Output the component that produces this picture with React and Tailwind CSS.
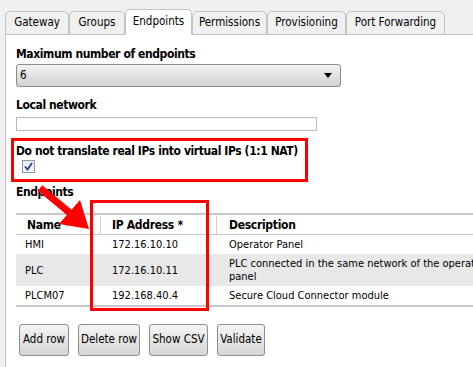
const tabs = [
  ['Gateway', 'w-[64px]'],
  ['Groups', 'w-[56px]'],
  ['Endpoints', 'w-[67px]'],
  ['Permissions', 'w-[75px]'],
  ['Provisioning', 'w-[79px]'],
  ['Port Forwarding', 'w-[99px]'],
];

const rows = [
  { name: 'HMI', ip: '172.16.10.10', desc: 'Operator Panel' },
  { name: 'PLC', ip: '172.16.10.11', desc: 'PLC connected in the same network of the operator panel', alt: true },
  { name: 'PLCM07', ip: '192.168.40.4', desc: 'Secure Cloud Connector module' },
];

function Btn({ children, className = '' }) {
  return (
    <button
      type="button"
      className={`h-[32px] whitespace-nowrap rounded-[3px] border border-[#8e8e8e] bg-gradient-to-b from-[#f4f4f4] to-[#d6d6d6] text-[11.5px] text-black ${className}`}
    >
      {children}
    </button>
  );
}

export default function App() {
  return (
    <div
      className="relative h-[367px] w-[473px] overflow-hidden bg-[#f0f0f0] text-black"
      style={{ fontFamily: '"DejaVu Sans Condensed", "Liberation Sans", Arial, sans-serif' }}
    >
      {/* tab strip */}
      <div className="flex h-[34px] items-end pl-[5px]">
        {tabs.map(([t, w]) => (
          <div
            key={t}
            className={`relative -mb-px flex h-[24px] items-center justify-center whitespace-nowrap rounded-t-[5px] border border-[#c4c4c4] text-[11.5px] ${w} ${
              t === 'Endpoints' ? 'z-10 h-[26px] border-b-white bg-white' : 'bg-[#f0f0f0]'
            }`}
          >
            {t}
          </div>
        ))}
      </div>

      {/* panel */}
      <div className="ml-[5px] h-[333px] border-l border-t border-[#c4c4c4] bg-white pl-[10px] pt-[11px]">
        <div className="whitespace-nowrap text-[12px] font-bold leading-[16px] tracking-[-0.4px]">
          Maximum number of endpoints
        </div>
        <div className="mt-[2px] flex h-[23px] w-[325px] items-center justify-between rounded-[3px] border border-[#8a8a8a] bg-gradient-to-b from-[#f2f2f2] to-[#d2d2d2] pl-[3px] pr-[8px] text-[11.5px]">
          <span>6</span>
          <svg width="8" height="5" viewBox="0 0 8 5">
            <path d="M0 0h8L4 5z" fill="#000" />
          </svg>
        </div>

        <div className="mt-[10px] whitespace-nowrap text-[12px] font-bold leading-[16px] tracking-[-0.4px]">
          Local network
        </div>
        <div className="mt-[4px] h-[14px] w-[301px] border border-[#b8b8b8] bg-white" />

        <div className="-ml-[5px] mt-[7px] h-[44px] w-[297px] border-[3px] border-[#ff0000] pl-[2px] pt-[2px]">
          <div className="whitespace-nowrap text-[12px] font-bold leading-[16px] tracking-[-0.4px]">
            Do not translate real IPs into virtual IPs (1:1 NAT)
          </div>
          <div className="ml-[6px] mt-[1px] flex h-[13px] w-[13px] items-center justify-center border border-[#8b96a8] bg-gradient-to-b from-[#e6e9f0] to-[#f6f7fa]">
            <svg width="9" height="9" viewBox="0 0 9 9">
              <path d="M1 4.5l2.5 3L8 1" fill="none" stroke="#27408b" strokeWidth="1.8" />
            </svg>
          </div>
        </div>

        <div className="mt-[2px] text-[12px] font-bold leading-[16px] tracking-[-0.4px]">Endpoints</div>

        <div className="mt-[13px] w-[500px] border-b-2 border-t-[2px] border-[#c8c8c8] text-[11px]">
          <div className="flex h-[20px] items-center whitespace-nowrap border-b border-[#c8c8c8] text-[12px] font-bold tracking-[-0.3px]">
            <div className="w-[85px] border-r border-[#d0d0d0] pl-[11px]">Name *</div>
            <div className="w-[116px] border-r border-[#d0d0d0] pl-[11px]">IP Address *</div>
            <div className="flex-1 pl-[12px]">Description</div>
          </div>
          {rows.map((r) => (
            <div
              key={r.name}
              className={`flex items-center py-[3px] leading-[13px] ${r.alt ? 'bg-[#e8e8e8]' : ''}`}
            >
              <div className="w-[85px] shrink-0 pl-[9px]">{r.name}</div>
              <div className="w-[116px] shrink-0 pl-[11px]">{r.ip}</div>
              <div className="w-[275px] shrink-0 pl-[12px]">{r.desc}</div>
            </div>
          ))}
        </div>

        <div className="ml-[3px] mt-[17px] flex gap-[9px]">
          <Btn className="w-[50px]">Add row</Btn>
          <Btn className="w-[62px]">Delete row</Btn>
          <Btn className="w-[59px]">Show CSV</Btn>
          <Btn className="w-[48px]">Validate</Btn>
        </div>
      </div>

      {/* annotations */}
      <div className="absolute left-[90px] top-[200px] h-[111px] w-[119px] border-[3px] border-[#ff0000]" />
      <svg className="absolute left-0 top-0" width="473" height="367" viewBox="0 0 473 367">
        <line x1="40" y1="188" x2="70" y2="213" stroke="#ff0000" strokeWidth="7" />
        <path d="M89 229 L59 224 L80 200 Z" fill="#ff0000" />
      </svg>
    </div>
  );
}
